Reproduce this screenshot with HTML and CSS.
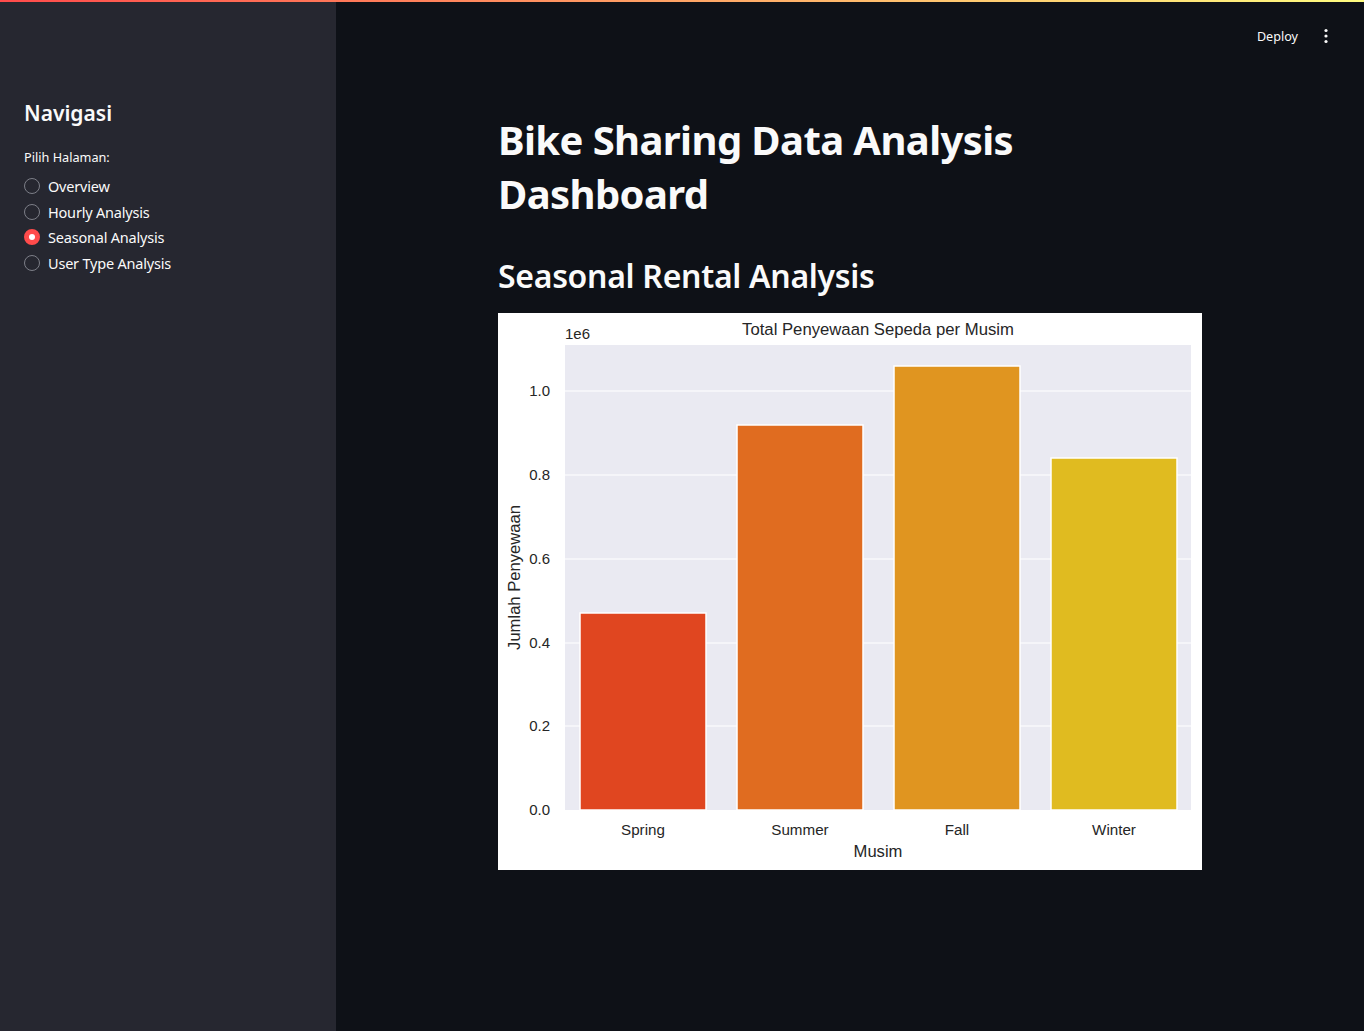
FILE: index.html
```html
<!DOCTYPE html>
<html lang="id">
<head>
<meta charset="utf-8">
<title>Bike Sharing Dashboard</title>
<link rel="stylesheet" href="styles.css">
</head>
<body>
<div class="decoration"></div>
<div class="app">
  <aside class="sidebar">
    <h2 class="side-title">Navigasi</h2>
    <div class="radio-label">Pilih Halaman:</div>
    <div class="radio-group">
      <label class="radio"><span class="dot"></span><span>Overview</span></label>
      <label class="radio"><span class="dot"></span><span>Hourly Analysis</span></label>
      <label class="radio checked"><span class="dot"></span><span>Seasonal Analysis</span></label>
      <label class="radio"><span class="dot"></span><span>User Type Analysis</span></label>
    </div>
  </aside>
  <main class="main">
    <header class="toolbar">
      <span class="deploy">Deploy</span>
      <svg class="kebab" width="16" height="16" viewBox="0 0 16 16"><circle cx="8" cy="2.5" r="1.6" fill="#fafafa"/><circle cx="8" cy="8" r="1.6" fill="#fafafa"/><circle cx="8" cy="13.5" r="1.6" fill="#fafafa"/></svg>
    </header>
    <div class="block">
      <h1 class="title">Bike Sharing Data Analysis Dashboard</h1>
      <h2 class="subtitle">Seasonal Rental Analysis</h2>
      <div class="chart">
        <svg width="704" height="557" viewBox="0 0 704 557" font-family="'Liberation Sans', Arial, sans-serif" fill="#262626">
          <rect x="0" y="0" width="704" height="557" fill="#ffffff"/>
          <rect x="67" y="32" width="626" height="465" fill="#eaeaf2"/>
          <g stroke="#ffffff" stroke-width="1.2">
            <line x1="67" x2="693" y1="78" y2="78"/>
            <line x1="67" x2="693" y1="162" y2="162"/>
            <line x1="67" x2="693" y1="246" y2="246"/>
            <line x1="67" x2="693" y1="330" y2="330"/>
            <line x1="67" x2="693" y1="413" y2="413"/>
          </g>
          <g stroke="#ffffff" stroke-width="1.5">
            <rect x="82" y="300" width="126" height="197" fill="#e04620"/>
            <rect x="239" y="112" width="126" height="385" fill="#e06c20"/>
            <rect x="396" y="53" width="126" height="444" fill="#e09520"/>
            <rect x="553" y="145" width="126" height="352" fill="#e0bb20"/>
          </g>
          <g font-size="15" text-anchor="end">
            <text x="52" y="83">1.0</text>
            <text x="52" y="167">0.8</text>
            <text x="52" y="251">0.6</text>
            <text x="52" y="335">0.4</text>
            <text x="52" y="418">0.2</text>
            <text x="52" y="502">0.0</text>
          </g>
          <g font-size="15.2" text-anchor="middle">
            <text x="145" y="522">Spring</text>
            <text x="302" y="522">Summer</text>
            <text x="459" y="522">Fall</text>
            <text x="616" y="522">Winter</text>
          </g>
          <text x="67" y="26" font-size="15">1e6</text>
          <text x="380" y="22" font-size="16.7" text-anchor="middle">Total Penyewaan Sepeda per Musim</text>
          <text x="380" y="544" font-size="16.6" text-anchor="middle">Musim</text>
          <text transform="translate(22 264.5) rotate(-90)" font-size="16.6" text-anchor="middle">Jumlah Penyewaan</text>
        </svg>
      </div>
    </div>
  </main>
</div>
</body>
</html>
```

FILE: styles.css
```css
* { box-sizing: border-box; }
html, body {
  margin: 0;
  padding: 0;
  height: 100%;
  background: #0e1117;
  color: #fafafa;
  font-family: "Source Sans Pro", "Noto Sans", sans-serif;
}
.decoration {
  position: fixed;
  top: 0;
  left: 0;
  right: 0;
  height: 2px;
  background: linear-gradient(90deg, #ff4b4b, #fffd80);
  z-index: 10;
}
.app {
  display: flex;
  min-height: 100vh;
}
.sidebar {
  width: 336px;
  flex: 0 0 336px;
  background: #262730;
  padding: 95px 24px 24px;
}
.side-title {
  margin: 0 0 16px;
  font-size: 21px;
  font-weight: 600;
  line-height: 36px;
}
.radio-label {
  font-size: 12.7px;
  line-height: 20px;
  margin-bottom: 6px;
}
.radio-group {
  display: flex;
  flex-direction: column;
}
.radio {
  display: flex;
  align-items: center;
  gap: 8px;
  height: 25.7px;
  font-size: 14.5px;
  letter-spacing: -0.2px;
}
.dot {
  width: 16px;
  height: 16px;
  border-radius: 50%;
  border: 1px solid #7d7f88;
  background: #262730;
  flex: 0 0 16px;
}
.radio.checked .dot {
  background: #ff4b4b;
  border: 5px solid #ff4b4b;
  position: relative;
}
.radio.checked .dot::after {
  content: "";
  position: absolute;
  left: 0;
  top: 0;
  width: 6px;
  height: 6px;
  border-radius: 50%;
  background: #ffffff;
}
.main {
  flex: 1;
  position: relative;
}
.toolbar {
  display: flex;
  justify-content: flex-end;
  align-items: center;
  height: 72px;
  padding: 0 30px 0 0;
  gap: 20px;
}
.deploy {
  font-size: 12.6px;
}
.kebab { display: block; }
.block {
  max-width: 736px;
  margin: 0 auto;
  padding: 41px 16px 160px;
}
.title {
  margin: 0;
  font-size: 40px;
  font-weight: 700;
  line-height: 54px;
  letter-spacing: -0.6px;
}
.subtitle {
  margin: 33px 0 15px;
  font-size: 32px;
  font-weight: 600;
  line-height: 44px;
  letter-spacing: -0.3px;
}
.chart svg { display: block; }
```
